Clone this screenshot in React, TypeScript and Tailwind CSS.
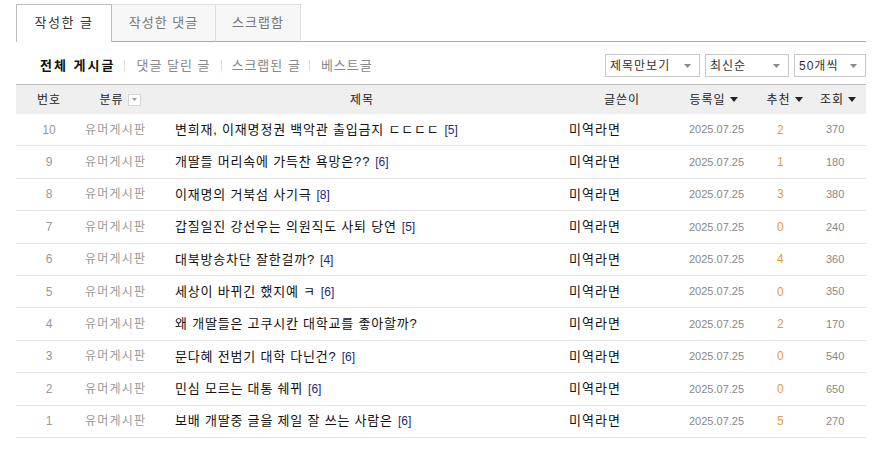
import React from "react";

const rows = [
  { no: 10, title: "변희재, 이재명정권 백악관 출입금지 ㄷㄷㄷㄷ", cmt: 5, rec: 2, view: 370 },
  { no: 9, title: "개딸들 머리속에 가득찬 욕망은??", cmt: 6, rec: 1, view: 180 },
  { no: 8, title: "이재명의 거북섬 사기극", cmt: 8, rec: 3, view: 380 },
  { no: 7, title: "갑질일진 강선우는 의원직도 사퇴 당연", cmt: 5, rec: 0, view: 240 },
  { no: 6, title: "대북방송차단 잘한걸까?", cmt: 4, rec: 4, view: 360 },
  { no: 5, title: "세상이 바뀌긴 했지예 ㅋ", cmt: 6, rec: 0, view: 350 },
  { no: 4, title: "왜 개딸들은 고쿠시칸 대학교를 좋아할까?", cmt: 0, rec: 2, view: 170 },
  { no: 3, title: "문다혜 전범기 대학 다닌건?", cmt: 6, rec: 0, view: 540 },
  { no: 2, title: "민심 모르는 대통 쉐뀌", cmt: 6, rec: 0, view: 650 },
  { no: 1, title: "보배 개딸중 글을 제일 잘 쓰는 사람은", cmt: 6, rec: 5, view: 270 },
];

const cols = "grid grid-cols-[66px_68px_410px_112px_83px_55px_56px]";

function SortArrow() {
  return (
    <svg width="8" height="5" viewBox="0 0 8 5" className="ml-[4px]">
      <path d="M0 0h8L4 5z" fill="#222" />
    </svg>
  );
}

function Select({ label, width }: { label: string; width: string }) {
  return (
    <div
      className={`flex h-[23px] items-center justify-between border border-[#c9c9c9] bg-white pl-[4px] pr-[8px] text-[12px] tracking-[1px] text-[#333] ${width}`}
    >
      <span>{label}</span>
      <svg width="7" height="4" viewBox="0 0 7 4">
        <path d="M0 0h7L3.5 4z" fill="#8a8a8a" />
      </svg>
    </div>
  );
}

export default function App() {
  return (
    <div className="h-[465px] w-[877px] overflow-hidden bg-white pt-[4px] pl-[16px] pr-[11px] font-['Liberation_Sans','Noto_Sans_CJK_KR',sans-serif] text-[#333]">
      <div className="flex h-[38px]">
        <div className="flex w-[96px] items-center justify-center border border-b-0 border-[#bdbdbd] pb-[1px] text-[13px] tracking-[1.5px] text-[#333]">
          작성한 글
        </div>
        <div className="flex w-[104px] items-center justify-center border-t border-r border-b border-t-[#dcdcdc] border-r-[#dcdcdc] border-b-[#a9a9a9] bg-[#f7f7f7] pb-[1px] text-[13px] tracking-[1px] text-[#777]">
          작성한 댓글
        </div>
        <div className="flex w-[85px] items-center justify-center border-t border-r border-b border-t-[#dcdcdc] border-r-[#dcdcdc] border-b-[#a9a9a9] bg-[#f7f7f7] pb-[1px] text-[13px] tracking-[1px] text-[#777]">
          스크랩함
        </div>
        <div className="flex-1 border-b border-[#a9a9a9]" />
      </div>

      <div className="mt-[12px] flex h-[23px] items-center">
        <div className="flex items-center pl-[24px] text-[13px] tracking-[1px] text-[#888]">
          <span className="font-bold tracking-[2px] text-[#111]">전체 게시글</span>
          <span className="mr-[11px] ml-[9px] h-[11px] w-px bg-[#ddd]" />
          <span>댓글 달린 글</span>
          <span className="mr-[9px] ml-[11px] h-[11px] w-px bg-[#ddd]" />
          <span>스크랩된 글</span>
          <span className="mr-[11px] ml-[8px] h-[11px] w-px bg-[#ddd]" />
          <span>베스트글</span>
        </div>
        <div className="ml-auto flex gap-[5px]">
          <Select label="제목만보기" width="w-[95px]" />
          <Select label="최신순" width="w-[84px]" />
          <Select label="50개씩" width="w-[72px]" />
        </div>
      </div>

      <div className={`${cols} mt-[7px] h-[30px] items-center border-t border-[#bdbdbd] bg-[#efefef] text-[12px] tracking-[1px] text-[#222]`}>
        <div className="text-center">번호</div>
        <div className="flex items-center justify-center pl-[8px]">
          분류
          <span className="ml-[4px] flex h-[12px] w-[13px] items-center justify-center border border-[#d6d6d6] bg-white">
            <svg width="5" height="3" viewBox="0 0 5 3">
              <path d="M0 0h5L2.5 3z" fill="#999" />
            </svg>
          </span>
        </div>
        <div className="pl-[14px] text-center">제목</div>
        <div className="pl-[12px] text-center">글쓴이</div>
        <div className="flex items-center justify-center">
          등록일
          <SortArrow />
        </div>
        <div className="flex items-center justify-center pl-[4px]">
          추천
          <SortArrow />
        </div>
        <div className="flex items-center justify-center">
          조회
          <SortArrow />
        </div>
      </div>

      {rows.map((r) => (
        <div
          key={r.no}
          className={`${cols} h-[32.4px] items-center border-b border-[#e3e3e3]`}
        >
          <div className="text-center text-[12px] text-[#999]">{r.no}</div>
          <div className="pl-[3px] text-[12px] tracking-[1.2px] text-[#999]">유머게시판</div>
          <div className="pl-[25px] text-[13px] tracking-[0.8px] text-[#111]">
            {r.title}
            {r.cmt > 0 && (
              <span className="ml-[5px] text-[12px] tracking-normal text-[#1b2a7a]">[{r.cmt}]</span>
            )}
          </div>
          <div className="pl-[9px] text-[13px] tracking-[1px] text-[#111]">미역라면</div>
          <div className="pl-[17px] text-[11px] text-[#888]">2025.07.25</div>
          <div className="pl-[22px] text-[12px] text-[#e39b3a]">{r.rec}</div>
          <div className="pl-[16px] text-[11px] text-[#888]">{r.view}</div>
        </div>
      ))}
    </div>
  );
}
